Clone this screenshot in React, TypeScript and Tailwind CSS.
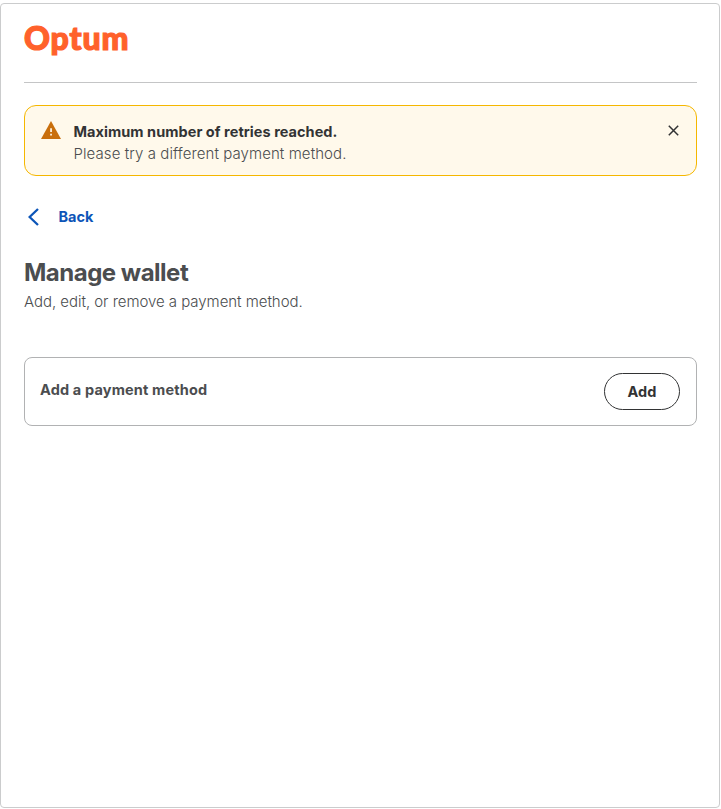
import { useState } from 'react'

function Logo() {
  return (
    <div className="h-[33px] font-['Lato'] text-[32px] font-black leading-[31px] tracking-[0.9px] text-[#ff612b] [-webkit-text-stroke:1.2px_#ff612b]">
      Optum
    </div>
  )
}

function WarningIcon() {
  return (
    <svg width="20" height="18" viewBox="0 0 20 18" className="shrink-0" aria-hidden="true">
      <path d="M10 0 20 18H0Z" fill="#c96f0c" />
      <path d="M9.2 7.2h1.7v3.7H9.2ZM9.2 12.8h1.7v1.8H9.2Z" fill="#fff9eb" />
    </svg>
  )
}

function RetryAlert({ onClose }: { onClose: () => void }) {
  return (
    <div role="alert" className="mt-[22px] flex h-[71px] items-start rounded-[12px] border border-[#f5b700] bg-[#fff9eb] pl-4 pr-[17px] pt-[15px]">
      <WarningIcon />
      <div className="ml-[12.5px] flex-1 leading-[22px]">
        <div className="text-[14.5px] font-bold tracking-[0.05px] text-[#323334]">Maximum number of retries reached.</div>
        <div className="text-[15px] font-light tracking-[0.08px] text-[#4b4d4f]">Please try a different payment method.</div>
      </div>
      <button onClick={onClose} aria-label="Close" className="mt-1 cursor-pointer">
        <svg width="11" height="11" viewBox="0 0 11 11" fill="none" stroke="#323334" strokeWidth="1.5">
          <path d="m.8.8 9.4 9.4M10.2.8.8 10.2" />
        </svg>
      </button>
    </div>
  )
}

export default function App() {
  const [showAlert, setShowAlert] = useState(true)

  return (
    <div className="bg-white pt-[3px] font-['Inter',sans-serif]">
      <main className="h-[805px] w-[720px] rounded-[4px] border border-[#cbcccd] pl-[23px] pr-[22px] pt-[18px]">
        <header className="h-[61px] border-b border-[#c4c5c6]">
          <Logo />
        </header>

        {showAlert && <RetryAlert onClose={() => setShowAlert(false)} />}

        <button className="mt-[30px] flex h-[22px] cursor-pointer items-center pl-1 text-[14.5px] font-bold text-[#0c55b8]">
          <svg width="12" height="18" viewBox="0 0 12 18" fill="none" stroke="#0c55b8" strokeWidth="2.3">
            <path d="M10 1 1.6 9l8.4 8" />
          </svg>
          <span className="ml-[18.5px]">Back</span>
        </button>

        <h1 className="mt-[29px] text-[24px] font-bold leading-[32px] tracking-[-0.5px] text-[#4b4d4f]">Manage wallet</h1>
        <p className="mt-[2px] text-[15px] font-light leading-[22px] tracking-[-0.04px] text-[#4b4d4f]">Add, edit, or remove a payment method.</p>

        <section className="mt-[44px] flex h-[69px] items-center justify-between rounded-[8px] border border-[#b1b2b3] pl-[15px] pr-4">
          <h2 className="mb-1 text-[14.5px] font-bold tracking-[0.16px] text-[#4b4d4f]">Add a payment method</h2>
          <button className="h-[37px] w-[76px] cursor-pointer rounded-full border border-[#323334] text-[14.5px] font-bold tracking-[0.1px] text-[#323334]">
            Add
          </button>
        </section>
      </main>
    </div>
  )
}
